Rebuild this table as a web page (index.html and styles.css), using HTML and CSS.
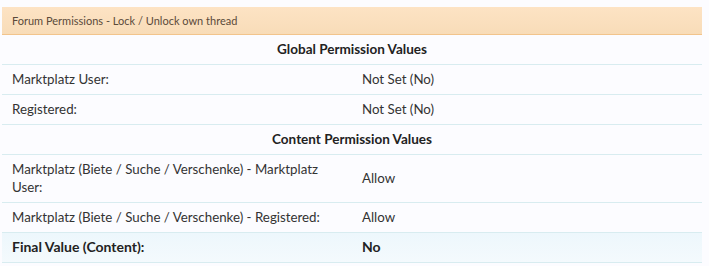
FILE: index.html
```html
<!DOCTYPE html>
<html lang="en">
  <head>
    <meta charset="UTF-8" />
    <link rel="stylesheet" href="styles.css">
  </head>
  <body>
    <div class="permBox">
      <h3 class="subHeading">Forum Permissions - Lock / Unlock own thread</h3>
      <div class="sectionTitle">Global Permission Values</div>
      <div class="permRow">
        <div class="label">Marktplatz User:</div>
        <div class="value">Not Set (No)</div>
      </div>
      <div class="permRow">
        <div class="label">Registered:</div>
        <div class="value">Not Set (No)</div>
      </div>
      <div class="sectionTitle">Content Permission Values</div>
      <div class="permRow">
        <div class="label">Marktplatz (Biete / Suche / Verschenke) - Marktplatz User:</div>
        <div class="value">Allow</div>
      </div>
      <div class="permRow">
        <div class="label">Marktplatz (Biete / Suche / Verschenke) - Registered:</div>
        <div class="value">Allow</div>
      </div>
      <div class="permRow final">
        <div class="label">Final Value (Content):</div>
        <div class="value">No</div>
      </div>
    </div>
  </body>
</html>
```

FILE: styles.css
```css
body {
  margin: 0;
  background-color: #fcfcff;
  font-family: "Lato", "Open Sans", sans-serif;
  font-size: 13.3px;
  color: #333;
}
.permBox {
  margin: 7px 7px 0 2px;
}
.permBox .subHeading {
  margin: 0;
  height: 27px;
  line-height: 27px;
  padding: 0 10px;
  font-size: 11px;
  font-weight: normal;
  color: #5a4a3a;
  background: linear-gradient(to bottom, #fde3c4, #f8dcb8);
  border-bottom: 1px solid #f2c48c;
}
.permBox .sectionTitle {
  height: 29px;
  line-height: 29px;
  text-align: center;
  font-weight: bold;
  font-size: 13.5px;
  color: #222;
  border-bottom: 1px solid #d8ecf0;
}
.permBox .permRow {
  display: grid;
  grid-template-columns: 350px 1fr;
  border-bottom: 1px solid #d8ecf0;
  align-items: center;
}
.permBox .permRow .label,
.permBox .permRow .value {
  padding: 5px 10px 6px;
  line-height: 18px;
}
.permBox .permRow.final {
  background: linear-gradient(to bottom, #edf7fc, #f4fafd);
  font-weight: bold;
  font-size: 14px;
  color: #222;
}
```
